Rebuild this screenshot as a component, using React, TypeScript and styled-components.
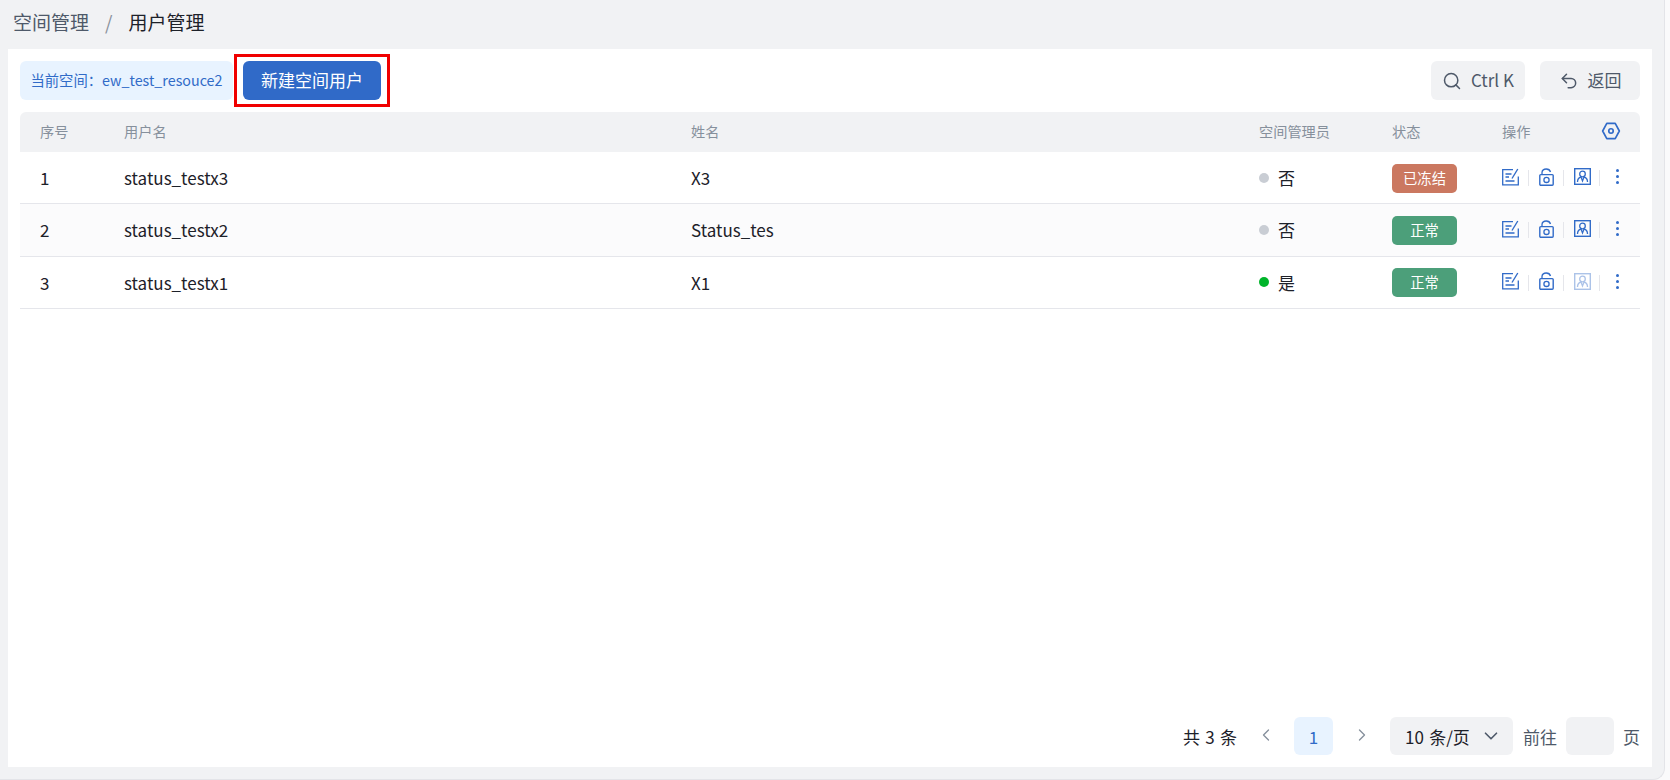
import React from "react";
import styled, { createGlobalStyle } from "styled-components";
import { Search, Undo2, ChevronLeft, ChevronRight, ChevronDown } from "lucide-react";

const Global = createGlobalStyle`
  html, body { margin: 0; padding: 0; background: #fafafb; }
  body { font-family: "Noto Sans CJK SC", "Noto Sans", sans-serif; }
  * { box-sizing: border-box; }
`;

const Page = styled.div`
  width: 1665px;
  height: 780px;
  background: #f1f2f4;
  border-right: 1px solid #e3e4e8;
  border-bottom: 1px solid #e3e4e8;
  border-bottom-right-radius: 12px;
  padding: 0 12px 12px 8px;
  display: flex;
  flex-direction: column;
`;

const Breadcrumb = styled.div`
  height: 49px;
  padding: 0 0 6px 5px;
  display: flex;
  align-items: center;
  font-size: 19px;
  color: #4e5969;
`;

const Slash = styled.span`
  margin: 0 16px;
  color: #8a919c;
`;

const Current = styled.span`
  color: #1d2129;
`;

const Panel = styled.main`
  flex: 1;
  background: #fff;
  padding: 12px;
  display: flex;
  flex-direction: column;
`;

const Toolbar = styled.div`
  display: flex;
  align-items: center;
  height: 39px;
  margin-bottom: 12px;
`;

const SpaceTag = styled.div`
  width: 213px;
  height: 39px;
  border-radius: 6px;
  background: #e8f3ff;
  color: #316bc8;
  font-size: 14.3px;
  padding-bottom: 2px;
  display: flex;
  align-items: center;
  justify-content: center;
  white-space: nowrap;
`;

const Highlighted = styled.div`
  position: relative;
  margin-left: 10px;
  &::after {
    content: "";
    position: absolute;
    inset: -7px -9px;
    border: 3px solid #f00000;
    pointer-events: none;
  }
`;

const PrimaryButton = styled.button`
  width: 138px;
  height: 39px;
  border: 0;
  border-radius: 6px;
  background: #306ac8;
  color: #fff;
  font: inherit;
  font-size: 17px;
  padding: 0 0 3px;
`;

const Spacer = styled.div`
  flex: 1;
`;

const GreyButton = styled.button<{ $w: number; $ml?: number }>`
  width: ${(p) => p.$w}px;
  height: 39px;
  margin-left: ${(p) => p.$ml ?? 0}px;
  border: 0;
  border-radius: 6px;
  background: #f1f2f4;
  color: #4e5969;
  font: inherit;
  font-size: 17px;
  display: flex;
  align-items: center;
  justify-content: center;
  gap: 9px;
  padding: 0;
  & > span {
    margin-top: -2px;
  }
`;

const columns = "84px 567px 568px 133px 110px 1fr";

const HeadRow = styled.div`
  display: grid;
  grid-template-columns: ${columns};
  height: 40px;
  background: #f1f2f4;
  border-radius: 6px 6px 0 0;
  align-items: center;
  font-size: 14.2px;
  color: #86909c;
`;

const HeadCell = styled.div`
  padding: 0 19px 2px 20px;
  display: flex;
  align-items: center;
  justify-content: space-between;
`;

const Row = styled.div<{ $alt?: boolean }>`
  display: grid;
  grid-template-columns: ${columns};
  height: 52.33px;
  align-items: center;
  font-size: 17px;
  color: #1d2129;
  background: ${(p) => (p.$alt ? "#fbfbfc" : "#fff")};
  border-bottom: 1px solid #e5e6eb;
`;

const Cell = styled.div`
  padding-left: 20px;
  display: flex;
  align-items: center;
  white-space: nowrap;
`;

const Dot = styled.span<{ $on?: boolean }>`
  width: 10px;
  height: 10px;
  border-radius: 50%;
  margin-right: 9px;
  background: ${(p) => (p.$on ? "#00b42a" : "#c9cdd4")};
`;

const Status = styled.span<{ $tone: "frozen" | "ok" }>`
  width: 65px;
  height: 29px;
  margin-top: 1px;
  border-radius: 5px;
  color: #fff;
  font-size: 14.3px;
  padding-bottom: 2px;
  display: flex;
  align-items: center;
  justify-content: center;
  background: ${(p) => (p.$tone === "frozen" ? "#cb7860" : "#4c9f7a")};
`;

const Sep = styled.span<{ $ml?: number }>`
  width: 1px;
  height: 16px;
  margin: 3px 10px 0 ${(p) => p.$ml ?? 9}px;
  background: #e5e6eb;
`;

const IconSvg = styled.svg<{ $dim?: boolean }>`
  display: block;
  flex: none;
  fill: none;
  stroke: #316bc8;
  stroke-width: 1.3;
  opacity: ${(p) => (p.$dim ? 0.4 : 1)};
`;

const EditIcon = () => (
  <IconSvg width="17" height="18" viewBox="0 0 17 18">
    <path d="M11 1.600H0.700v15.300h15.600V8.500" />
    <path d="M3.500 6h6M3.500 9h3.500M3.500 13h9" />
    <path d="M10 10.500L15.800 1" strokeWidth="1.4" />
  </IconSvg>
);

const LockIcon = () => (
  <IconSvg width="15" height="18" viewBox="0 0 15 18">
    <rect x="0.8" y="6.6" width="13.4" height="10.6" rx="1" strokeWidth="1.4" />
    <circle cx="7.5" cy="11.9" r="2.6" />
    <path d="M3 6.5V4.5C3 2.2 5 1 7.2 1c2.2 0 3.8 1.2 4.3 3" />
  </IconSvg>
);

const PortraitIcon = ({ dim }: { dim?: boolean }) => (
  <IconSvg $dim={dim} width="17" height="17" viewBox="0 0 17 17">
    <rect x="0.7" y="0.7" width="15.6" height="15.6" strokeWidth="1.4" />
    <circle cx="8.5" cy="6" r="2.8" />
    <path d="M3.500 14c0-3 1.800-4.600 3.500-5l1.500 4 1.500-4c1.700.4 3.500 2 3.500 5" />
  </IconSvg>
);

const DotsIcon = styled.span`
  display: flex;
  flex-direction: column;
  justify-content: space-between;
  height: 15px;
  margin: 0 0 0 6px;
  & > i {
    display: block;
    width: 3px;
    height: 3px;
    border-radius: 50%;
    background: #316bc8;
  }
`;

const Actions = styled.div`
  padding-left: 20px;
  display: flex;
  align-items: center;
  margin-top: -2px;
`;

const Pager = styled.footer`
  margin-top: auto;
  display: flex;
  align-items: center;
  justify-content: flex-end;
  height: 38px;
  font-size: 17px;
  word-spacing: 1.5px;
  color: #1d2129;
`;

const PageArrow = styled.span`
  display: flex;
  margin: -3px 18px 0 19px;
  color: #86909c;
`;

const PageNum = styled.span`
  width: 39px;
  height: 38px;
  border-radius: 6px;
  background: #e8f3ff;
  color: #316bc8;
  display: flex;
  align-items: center;
  justify-content: center;
`;

const PageSize = styled.div`
  width: 123px;
  height: 38px;
  border-radius: 6px;
  background: #f1f2f4;
  display: flex;
  align-items: center;
  justify-content: space-between;
  padding: 0 11px 0 15px;
  margin-right: 10px;
`;

const Muted = styled.span`
  color: #4e5969;
`;

const PageInput = styled.div`
  width: 48px;
  height: 38px;
  border-radius: 6px;
  background: #f1f2f4;
  margin: 0 9px;
`;

const SettingsIcon = () => (
  <svg width="20" height="20" viewBox="0 0 18 18" fill="none" stroke="#316bc8" strokeWidth="1.5">
    <path d="M5.2 2.2h7.600L16.500 9l-3.700 6.800H5.200L1.500 9z" strokeLinejoin="round" />
    <circle cx="9" cy="9" r="2" />
  </svg>
);

const rows = [
  { id: 1, user: "status_testx3", name: "X3", admin: false, frozen: true },
  { id: 2, user: "status_testx2", name: "Status_tes", admin: false, frozen: false },
  { id: 3, user: "status_testx1", name: "X1", admin: true, frozen: false },
];

export default function App() {
  return (
    <>
      <Global />
      <Page>
        <Breadcrumb>
          <span>空间管理</span>
          <Slash>/</Slash>
          <Current>用户管理</Current>
        </Breadcrumb>
        <Panel>
          <Toolbar>
            <SpaceTag>当前空间：ew_test_resouce2</SpaceTag>
            <Highlighted>
              <PrimaryButton>新建空间用户</PrimaryButton>
            </Highlighted>
            <Spacer />
            <GreyButton $w={94}>
              <Search size={20} strokeWidth={1.8} />
              <span>Ctrl K</span>
            </GreyButton>
            <GreyButton $w={100} $ml={15}>
              <Undo2 size={20} strokeWidth={1.8} />
              <span>返回</span>
            </GreyButton>
          </Toolbar>
          <HeadRow>
            <HeadCell>序号</HeadCell>
            <HeadCell>用户名</HeadCell>
            <HeadCell>姓名</HeadCell>
            <HeadCell>空间管理员</HeadCell>
            <HeadCell>状态</HeadCell>
            <HeadCell>
              操作
              <SettingsIcon />
            </HeadCell>
          </HeadRow>
          {rows.map((r) => (
            <Row key={r.id} $alt={r.id === 2}>
              <Cell>{r.id}</Cell>
              <Cell>{r.user}</Cell>
              <Cell>{r.name}</Cell>
              <Cell>
                <Dot $on={r.admin} />
                {r.admin ? "是" : "否"}
              </Cell>
              <Cell>
                <Status $tone={r.frozen ? "frozen" : "ok"}>{r.frozen ? "已冻结" : "正常"}</Status>
              </Cell>
              <Actions>
                <EditIcon />
                <Sep />
                <LockIcon />
                <Sep />
                <PortraitIcon dim={r.admin} />
                <Sep $ml={8} />
                <DotsIcon>
                  <i />
                  <i />
                  <i />
                </DotsIcon>
              </Actions>
            </Row>
          ))}
          <Pager>
            <span>共 3 条</span>
            <PageArrow>
              <ChevronLeft size={20} strokeWidth={1.6} />
            </PageArrow>
            <PageNum>1</PageNum>
            <PageArrow>
              <ChevronRight size={20} strokeWidth={1.6} />
            </PageArrow>
            <PageSize>
              10 条/页
              <ChevronDown size={22} strokeWidth={1.8} color="#4e5969" />
            </PageSize>
            <Muted>前往</Muted>
            <PageInput />
            <Muted>页</Muted>
          </Pager>
        </Panel>
      </Page>
    </>
  );
}
